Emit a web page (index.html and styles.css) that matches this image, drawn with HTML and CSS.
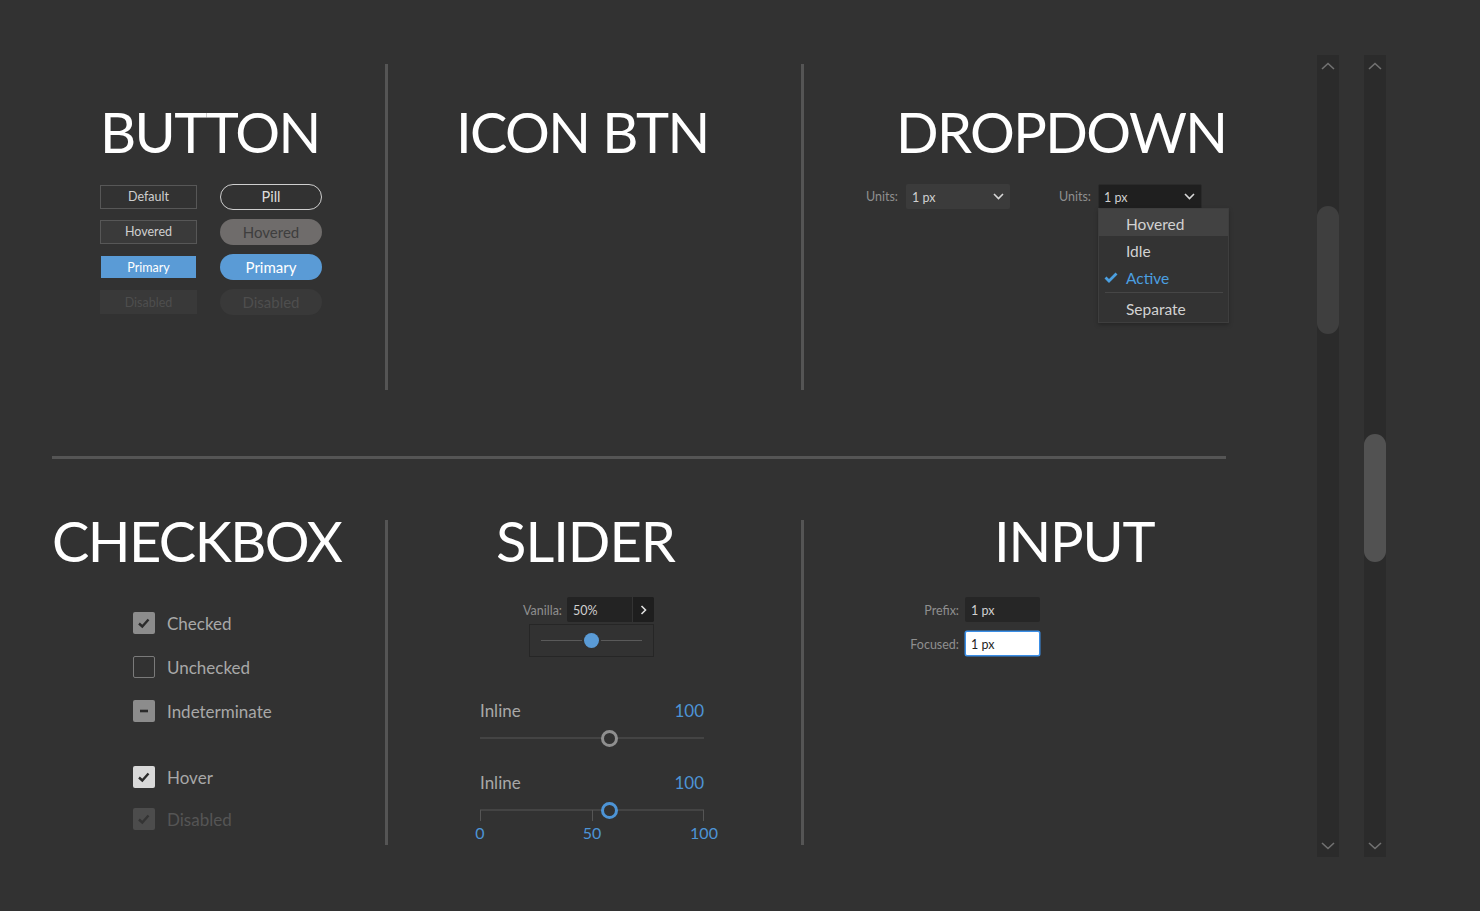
FILE: index.html
```html
<!DOCTYPE html>
<html lang="en">
<head>
<meta charset="utf-8">
<title>UI Kit</title>
<link rel="stylesheet" href="styles.css">
</head>
<body>
<div class="page">
  <div class="main">
    <div class="row row-top">
      <section class="sec sec-button">
        <h1 class="title">BUTTON</h1>
        <div class="btn-grid">
          <button class="btn">Default</button>
          <button class="pill pill-default">Pill</button>
          <button class="btn btn-hover">Hovered</button>
          <button class="pill pill-hover">Hovered</button>
          <button class="btn btn-primary">Primary</button>
          <button class="pill pill-primary">Primary</button>
          <button class="btn btn-disabled">Disabled</button>
          <button class="pill pill-disabled">Disabled</button>
        </div>
      </section>
      <div class="vdiv"></div>
      <section class="sec sec-iconbtn">
        <h1 class="title">ICON BTN</h1>
      </section>
      <div class="vdiv"></div>
      <section class="sec sec-dropdown">
        <h1 class="title">DROPDOWN</h1>
        <div class="dd-row">
          <div class="dd-group">
            <span class="lbl">Units:</span>
            <div class="select">
              <span>1 px</span>
              <svg class="chev" width="11" height="7" viewBox="0 0 11 7"><path d="M1 1 L5.5 5.5 L10 1" fill="none" stroke="#d8d8d8" stroke-width="1.6"/></svg>
            </div>
          </div>
          <div class="dd-group dd-group-open">
            <span class="lbl">Units:</span>
            <div class="select select-open">
              <span>1 px</span>
              <svg class="chev" width="11" height="7" viewBox="0 0 11 7"><path d="M1 1 L5.5 5.5 L10 1" fill="none" stroke="#d8d8d8" stroke-width="1.6"/></svg>
              <div class="menu">
                <div class="menu-item menu-hover">Hovered</div>
                <div class="menu-item">Idle</div>
                <div class="menu-item menu-active">
                  <svg class="menu-check" width="14" height="11" viewBox="0 0 14 11"><path d="M1.5 5.5 L5 9 L12.5 1.5" fill="none" stroke="#4b9fe0" stroke-width="2.8"/></svg>
                  Active
                </div>
                <div class="menu-sep"></div>
                <div class="menu-item">Separate</div>
              </div>
            </div>
          </div>
        </div>
      </section>
    </div>

    <div class="hdiv"></div>

    <div class="row row-bottom">
      <section class="sec sec-checkbox">
        <h1 class="title">CHECKBOX</h1>
        <div class="cb-list">
          <div class="cb-row">
            <span class="cb cb-checked"><svg width="22" height="22" viewBox="0 0 22 22"><path d="M6 11.5 L9.3 14.5 L15.5 7.5" fill="none" stroke="#2b2b2b" stroke-width="2.4"/></svg></span>
            <span class="cb-label">Checked</span>
          </div>
          <div class="cb-row">
            <span class="cb cb-unchecked"></span>
            <span class="cb-label">Unchecked</span>
          </div>
          <div class="cb-row">
            <span class="cb cb-checked"><svg width="22" height="22" viewBox="0 0 22 22"><path d="M7 11 L15 11" fill="none" stroke="#2b2b2b" stroke-width="2.6"/></svg></span>
            <span class="cb-label">Indeterminate</span>
          </div>
          <div class="cb-row cb-row-gap">
            <span class="cb cb-hover"><svg width="22" height="22" viewBox="0 0 22 22"><path d="M6 11.5 L9.3 14.5 L15.5 7.5" fill="none" stroke="#2b2b2b" stroke-width="2.4"/></svg></span>
            <span class="cb-label">Hover</span>
          </div>
          <div class="cb-row cb-row-last">
            <span class="cb cb-disabled"><svg width="22" height="22" viewBox="0 0 22 22"><path d="M6 11.5 L9.3 14.5 L15.5 7.5" fill="none" stroke="#343434" stroke-width="2.4"/></svg></span>
            <span class="cb-label cb-label-disabled">Disabled</span>
          </div>
        </div>
      </section>
      <div class="vdiv vdiv-bottom"></div>
      <section class="sec sec-slider">
        <h1 class="title">SLIDER</h1>
        <div class="vanilla">
          <div class="vanilla-row">
            <span class="lbl">Vanilla:</span>
            <div class="vanilla-input">
              <span class="vanilla-value">50%</span>
              <span class="vanilla-btn"><svg width="7" height="10" viewBox="0 0 7 10"><path d="M1.5 1 L5.5 5 L1.5 9" fill="none" stroke="#e0e0e0" stroke-width="1.6"/></svg></span>
            </div>
          </div>
          <div class="vanilla-box">
            <div class="vtrack"><span class="vthumb"></span></div>
          </div>
        </div>

        <div class="islider">
          <div class="islider-head"><span class="ilabel">Inline</span><span class="ivalue">100</span></div>
          <div class="itrack"><span class="ithumb ithumb-gray" style="left: 57.6%"></span></div>
        </div>
        <div class="islider islider-2">
          <div class="islider-head"><span class="ilabel">Inline</span><span class="ivalue">100</span></div>
          <div class="itrack itrack-ticks">
            <span class="tick tick-0"></span><span class="tick tick-50"></span><span class="tick tick-100"></span>
            <span class="ithumb ithumb-blue" style="left: 57.6%"></span>
          </div>
          <div class="tick-labels">
            <span class="tick-label"><span>0</span></span>
            <span class="tick-label"><span>50</span></span>
            <span class="tick-label"><span>100</span></span>
          </div>
        </div>
      </section>
      <div class="vdiv vdiv-bottom"></div>
      <section class="sec sec-input">
        <h1 class="title">INPUT</h1>
        <div class="inputs">
          <span class="lbl in-lbl">Prefix:</span>
          <div class="field">1 px</div>
          <span class="lbl in-lbl">Focused:</span>
          <div class="field field-focused">1 px</div>
        </div>
      </section>
    </div>
  </div>

  <div class="scrolls">
    <div class="strack">
      <div class="sarrow"><svg width="14" height="8" viewBox="0 0 14 8"><path d="M1 7 L7 1.5 L13 7" fill="none" stroke="#727272" stroke-width="1.6"/></svg></div>
      <div class="sthumb sthumb-1"></div>
      <div class="sfill"></div>
      <div class="sarrow"><svg width="14" height="8" viewBox="0 0 14 8"><path d="M1 1 L7 6.5 L13 1" fill="none" stroke="#727272" stroke-width="1.6"/></svg></div>
    </div>
    <div class="strack">
      <div class="sarrow"><svg width="14" height="8" viewBox="0 0 14 8"><path d="M1 7 L7 1.5 L13 7" fill="none" stroke="#727272" stroke-width="1.6"/></svg></div>
      <div class="sthumb sthumb-2"></div>
      <div class="sfill"></div>
      <div class="sarrow"><svg width="14" height="8" viewBox="0 0 14 8"><path d="M1 1 L7 6.5 L13 1" fill="none" stroke="#727272" stroke-width="1.6"/></svg></div>
    </div>
  </div>
</div>
</body>
</html>
```

FILE: styles.css
```css
* { box-sizing: border-box; }

html, body {
  margin: 0;
  padding: 0;
  background: #323232;
  height: 100%;
  overflow: hidden;
}

body {
  font-family: Lato, "Open Sans", sans-serif;
  color: #cfcfcf;
}

.page {
  display: flex;
  align-items: flex-start;
}

.main {
  margin-left: 52px;
  width: 1174px;
}

.row {
  display: grid;
  grid-template-columns: 333px 3px 413px 3px 422px;
}

.row-top {
  margin-top: 64px;
  height: 326px;
}

.row-bottom {
  margin-top: 44px;
  height: 342px;
}

.vdiv {
  background: #555555;
  width: 3px;
}

.vdiv-bottom {
  margin-top: 17px;
}

.hdiv {
  margin-top: 66px;
  height: 3px;
  background: #555555;
}

.sec {
  position: relative;
}

.title {
  margin: 0;
  padding-top: 5px;
  font-weight: 400;
  font-size: 56px;
  line-height: 65px;
  color: #ffffff;
  letter-spacing: -1.6px;
  white-space: nowrap;
}

.row-top .title { margin-top: 30px; }

.sec-button .title { padding-left: 48px; }
.sec-iconbtn .title { padding-left: 68px; }
.sec-dropdown .title { padding-left: 92px; }
.sec-checkbox .title { padding-left: 0; }
.sec-slider .title { padding-left: 108px; letter-spacing: -1px; }
.sec-input .title { padding-left: 190px; letter-spacing: -1.2px; }

/* Buttons */
.btn-grid {
  margin-top: 15px;
  margin-left: 48px;
  display: grid;
  grid-template-columns: 97px 102px;
  column-gap: 23px;
  grid-auto-rows: 35px;
  align-items: center;
}

.btn, .pill {
  font-family: Lato, "Open Sans", sans-serif;
  padding: 0;
  margin: 0;
  display: flex;
  align-items: center;
  justify-content: center;
  cursor: default;
}

.btn {
  height: 24px;
  width: 97px;
  font-size: 12.5px;
  color: #cfcfcf;
  background: transparent;
  border: 1px solid #575757;
}

.btn-hover {
  background: #3a3a3a;
}

.btn-primary {
  background: #5a9bd6;
  border-color: transparent;
  background-clip: padding-box;
  color: #ffffff;
  padding-top: 1px;
}

.btn-disabled {
  background: #393939;
  border-color: #393939;
  color: #4e4e4e;
  padding-top: 2px;
}

.pill {
  width: 102px;
  height: 26px;
  border-radius: 13px;
  font-size: 15px;
  border: 1px solid transparent;
}

.pill-default {
  border: 1.5px solid #cfcfcf;
  background: transparent;
  color: #dcdcdc;
  font-size: 14.5px;
}

.pill-hover {
  background: #6f6c6b;
  color: #3e3e3e;
}

.pill-primary {
  background: #5a9bd6;
  color: #ffffff;
}

.pill-disabled {
  background: #393939;
  color: #4e4e4e;
}

/* Dropdown */
.lbl {
  font-size: 12.5px;
  color: #8f8f8f;
}

.dd-row {
  margin-top: 20px;
  margin-left: 62px;
  display: flex;
  gap: 49px;
}

.dd-group {
  display: flex;
  align-items: center;
  gap: 8px;
}

.dd-group-open { gap: 7px; }

.select {
  position: relative;
  width: 104px;
  height: 25px;
  display: flex;
  align-items: center;
  justify-content: space-between;
  padding: 0 6px;
  background: #3b3b3b;
  border-radius: 2px;
  font-size: 12.5px;
  color: #d0d0d0;
}

.select > span { padding-top: 1px; }

.select-open {
  background: #1f1f1f;
  border: 1px solid #2a2a2a;
  padding-left: 5px;
}

.menu {
  position: absolute;
  top: 100%;
  left: -1px;
  width: 131px;
  background: #333333;
  border: 1px solid #3e3e3e;
  padding: 0 0 1px;
  box-shadow: 0 2px 4px rgba(0,0,0,0.25);
  z-index: 2;
}

.menu-item {
  position: relative;
  height: 27px;
  padding-top: 3px;
  line-height: 25px;
  padding-left: 27px;
  font-size: 15.5px;
  color: #d2d2d2;
}

.menu-hover {
  background: #424242;
}

.menu-active {
  color: #4b9fe0;
}

.menu-check {
  position: absolute;
  left: 5px;
  top: 9px;
}

.menu-sep {
  margin: 2px 5px 1px 6px;
  height: 1px;
  background: #464646;
}

/* Checkbox */
.cb-list {
  margin-left: 81px;
  margin-top: 28px;
}

.cb-row {
  height: 44px;
  display: flex;
  align-items: center;
  gap: 12px;
}

.cb-row-gap { margin-top: 22px; }
.cb-row-last { margin-top: -2px; }

.cb {
  width: 22px;
  height: 22px;
  border-radius: 2px;
  display: block;
}

.cb svg { display: block; }

.cb-checked { background: #8c8c8c; }
.cb-unchecked { border: 1.5px solid #7a7a7a; }
.cb-hover { background: #d9d9d9; }
.cb-disabled { background: #4c4c4c; }

.cb-label {
  font-size: 17px;
  color: #a8a8a8;
}

.cb-label-disabled { color: #555555; }

/* Slider */
.vanilla {
  margin-top: 24px;
  margin-left: 135px;
  width: 131px;
  display: flex;
  flex-direction: column;
  align-items: flex-end;
}

.vanilla-row {
  display: flex;
  align-items: center;
  gap: 5px;
}

.vanilla-row .lbl { padding-top: 2px; }

.vanilla-input {
  display: flex;
  height: 25px;
  width: 87px;
  background: #232323;
  border-radius: 2px;
  overflow: hidden;
}

.vanilla-value {
  flex: 1;
  font-size: 12.5px;
  color: #d0d0d0;
  line-height: 25px;
  padding-left: 6px;
  padding-top: 1px;
}

.vanilla-btn {
  width: 22px;
  border-left: 1px solid #333;
  background: #1e1e1e;
  display: flex;
  align-items: center;
  justify-content: center;
}

.vanilla-box {
  margin-top: 2px;
  width: 125px;
  height: 33px;
  border: 1px solid #262626;
  display: flex;
  align-items: center;
  padding: 0 11px;
}

.vtrack {
  position: relative;
  flex: 1;
  height: 1px;
  background: #5a5a5a;
}

.vthumb {
  position: absolute;
  left: 50%;
  top: 50%;
  width: 15px;
  height: 15px;
  margin: -7.5px 0 0 -7.5px;
  border-radius: 50%;
  background: #5a9bd6;
  box-shadow: 0 0 0 2px #323232;
}

.islider {
  margin-left: 92px;
  width: 224px;
  margin-top: 44px;
}

.islider-2 { margin-top: 25px; }

.islider-head {
  display: flex;
  justify-content: space-between;
  height: 20px;
  line-height: 20px;
}

.ilabel {
  font-size: 17px;
  color: #a8a8a8;
}

.ivalue {
  font-size: 17px;
  color: #4d94d6;
}

.itrack {
  position: relative;
  height: 20px;
  margin-top: 7px;
}

.itrack::before {
  content: "";
  position: absolute;
  left: 0;
  right: 0;
  top: 9px;
  height: 2px;
  background: #444444;
}

.tick {
  position: absolute;
  top: 10px;
  width: 1px;
  height: 11px;
  background: #555555;
}

.tick-0 { left: 0; }
.tick-50 { left: 50%; }
.tick-100 { right: 0; }

.ithumb {
  position: absolute;
  top: 10px;
  width: 17px;
  height: 17px;
  margin: -8.5px 0 0 -8.5px;
  border-radius: 50%;
  background: #323232;
  border: 3px solid #8f8f8f;
}

.ithumb-blue { border-color: #4d94d6; }

.tick-labels {
  display: flex;
  justify-content: space-between;
  margin-top: 3px;
  height: 20px;
  line-height: 20px;
}

.tick-label {
  width: 0;
  display: flex;
  justify-content: center;
  font-size: 16px;
  color: #4d94d6;
}

/* Input */
.inputs {
  margin-top: 24px;
  width: 236px;
  display: grid;
  grid-template-columns: 1fr 75px;
  column-gap: 6px;
  row-gap: 9px;
  align-items: center;
}

.in-lbl { text-align: right; padding-top: 2px; }

.field {
  height: 25px;
  line-height: 25px;
  padding-left: 6px;
  padding-top: 1px;
  background: #262626;
  border-radius: 2px;
  font-size: 12.5px;
  color: #d0d0d0;
}

.field-focused {
  background: #ffffff;
  border: 1px solid #3a8ee6;
  box-shadow: 0 0 0 0.5px #3a8ee6;
  color: #1e1e1e;
  line-height: 23px;
  padding-left: 5px;
}

/* Scrollbars */
.scrolls {
  margin-left: 91px;
  margin-top: 55px;
  display: flex;
  gap: 25px;
}

.strack {
  width: 22px;
  height: 802px;
  background: #2b2b2b;
  display: flex;
  flex-direction: column;
  align-items: center;
}

.sarrow {
  height: 22px;
  display: flex;
  align-items: center;
  justify-content: center;
}

.sarrow svg { display: block; }

.sthumb {
  width: 22px;
  height: 128px;
  border-radius: 11px;
}

.sthumb-1 {
  margin-top: 129px;
  background: #3f3f3f;
}

.sthumb-2 {
  margin-top: 357px;
  background: #525252;
}

.sfill { flex: 1; }
```
